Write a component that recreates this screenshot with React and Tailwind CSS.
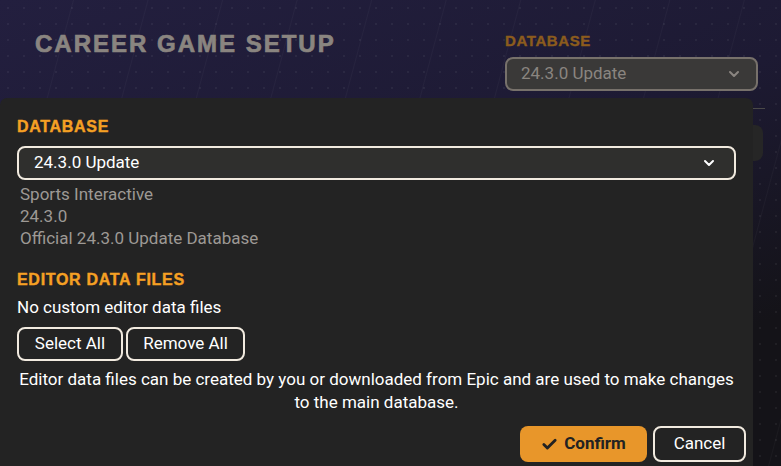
import React from "react";
import { ChevronDown, Check } from "lucide-react";

export default function App() {
  return (
    <div className="relative w-[781px] h-[466px] overflow-hidden bg-[linear-gradient(160deg,#231f3f_0%,#1d1a33_45%,#141318_80%)] font-['Roboto',sans-serif]">
      {/* dotted pattern */}
      <div className="absolute inset-0 bg-[radial-gradient(circle,#ffffff0d_1.2px,transparent_1.5px)] bg-[length:16px_16px]" />
      <div className="absolute inset-0 bg-[repeating-linear-gradient(105deg,transparent_0px,transparent_70px,#ffffff08_71px,transparent_72px)]" />

      {/* background page */}
      <div className="relative flex items-start pl-[35px] pt-[30px] pr-[23px]">
        <h1 className="font-['Liberation_Sans',sans-serif] font-black text-[24px] leading-[28px] tracking-[2px] text-[#8a8580] [-webkit-text-stroke:0.7px_#8a8580]">
          CAREER GAME SETUP
        </h1>
        <div className="ml-auto flex flex-col w-[253px] pt-[3px]">
          <div className="font-['Liberation_Sans',sans-serif] font-bold text-[15px] leading-[16px] tracking-[0.6px] text-[#8c5c1d] [-webkit-text-stroke:0.4px_#8c5c1d]">
            DATABASE
          </div>
          <div className="mt-[8px] h-[34px] rounded-[8px] border-2 border-[#77716b] bg-[#3a3938] flex items-center pl-[14px] pr-[14px] text-[17px] text-[#8a8580]">
            <span>24.3.0 Update</span>
            <ChevronDown className="ml-auto text-[#8a8580]" size={16} strokeWidth={3} />
          </div>
        </div>
      </div>
      <div className="relative ml-[490px] mt-[17px] w-[275px] h-px bg-[#4a4948]" />
      <div className="relative ml-[490px] mt-[16px] w-[273px] h-[36px] rounded-[8px] bg-[#262626]" />

      {/* modal */}
      <div className="absolute left-0 top-[98px] w-[753px] bottom-0 rounded-tr-[7px] rounded-tl-[7px] bg-[#232323] pl-[17px] pr-[17px] pt-[20px]">
        <div className="font-['Liberation_Sans',sans-serif] font-bold text-[16px] leading-[18px] tracking-[0.7px] text-[#f5a023] [-webkit-text-stroke:0.4px_#f5a023]">
          DATABASE
        </div>
        <div className="mt-[10px] h-[34px] rounded-[8px] border-2 border-[#f1eadf] bg-[#2f2f2d] flex items-center pl-[15px] pr-[17px] text-[17px] text-white">
          <span>24.3.0 Update</span>
          <ChevronDown className="ml-auto text-white" size={16} strokeWidth={3} />
        </div>
        <div className="mt-[3px] pl-[3px] text-[17px] leading-[22px] text-[#9d9995]">
          <div>Sports Interactive</div>
          <div>24.3.0</div>
          <div>Official 24.3.0 Update Database</div>
        </div>
        <div className="mt-[22px] font-['Liberation_Sans',sans-serif] font-bold text-[16px] leading-[18px] tracking-[0.7px] text-[#f5a023] [-webkit-text-stroke:0.4px_#f5a023]">
          EDITOR DATA FILES
        </div>
        <div className="mt-[7px] text-[17px] leading-[22px] text-white">No custom editor data files</div>
        <div className="mt-[9px] flex gap-[3px]">
          <button className="h-[34px] w-[106px] rounded-[8px] border-2 border-[#f1eadf] text-[17px] text-white">
            Select All
          </button>
          <button className="h-[34px] w-[119px] rounded-[8px] border-2 border-[#f1eadf] text-[17px] text-white">
            Remove All
          </button>
        </div>
        <p className="mt-[7px] text-center text-[17px] leading-[23px] text-white">
          Editor data files can be created by you or downloaded from Epic and are used to make changes
          <br />
          to the main database.
        </p>
        <div className="mt-[12px] flex justify-end gap-[6px] mr-[-10px]">
          <button className="h-[36px] w-[127px] rounded-[8px] bg-[#e8962a] flex items-center justify-center gap-[6px] text-[17px] font-bold text-[#222]">
            <Check size={17} strokeWidth={4} />
            Confirm
          </button>
          <button className="h-[36px] w-[93px] rounded-[8px] border-2 border-[#f1eadf] text-[17px] text-white">
            Cancel
          </button>
        </div>
      </div>
    </div>
  );
}
